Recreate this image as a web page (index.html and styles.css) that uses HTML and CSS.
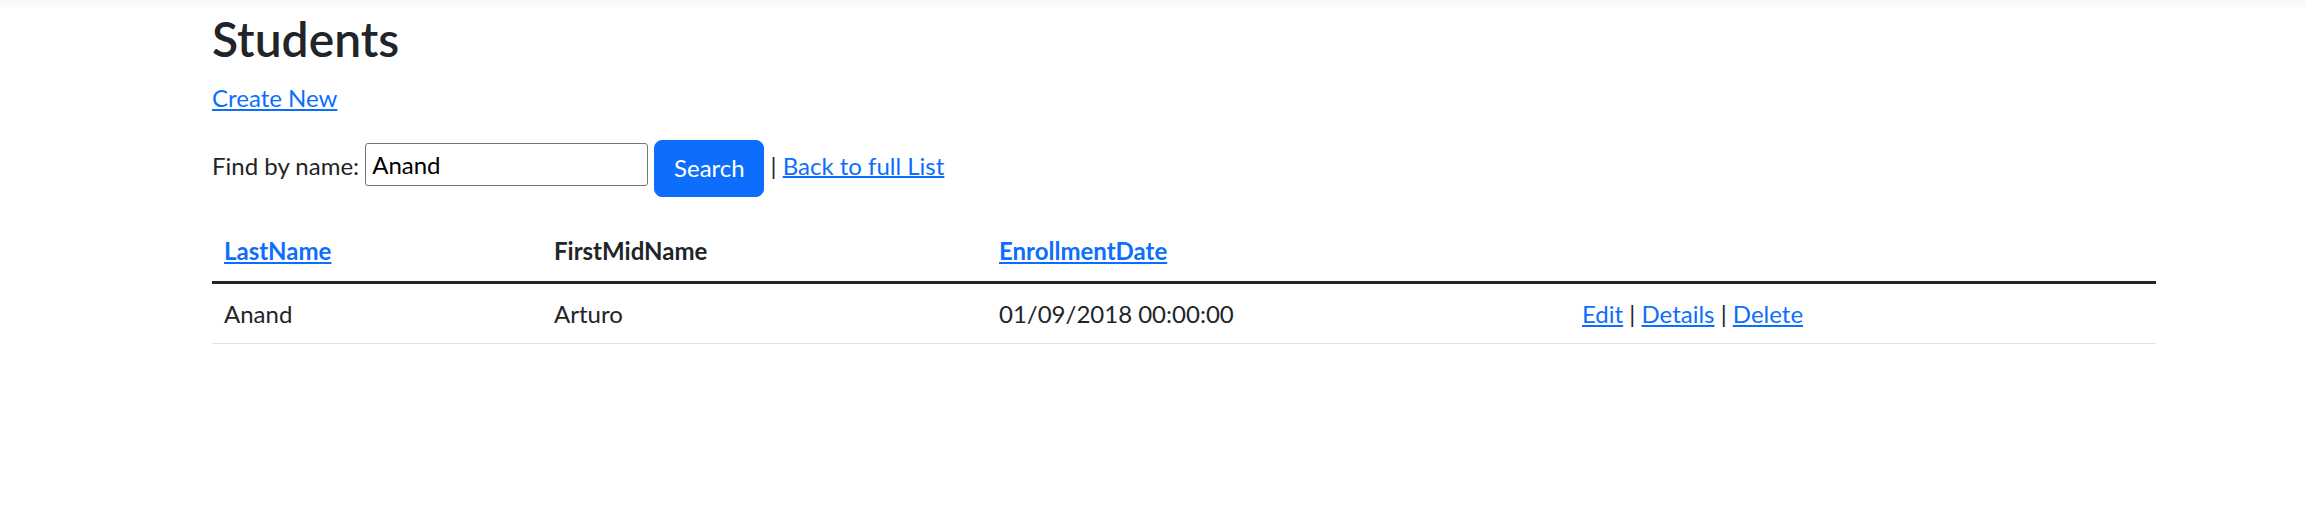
FILE: index.html
```html
<!DOCTYPE html>
<html lang="en">
<head>
<meta charset="utf-8">
<title>Index - Students</title>
<link rel="stylesheet" href="styles.css">
</head>
<body>
<div class="topbar"></div>
<main class="page">
  <h2 class="title">Students</h2>
  <p class="para"><a href="#" class="link">Create New</a></p>
  <form class="para search-form">
    Find by name: <input type="text" class="search-input" value="Anand"> <input type="submit" value="Search" class="btn-primary"> | <a href="#" class="link">Back to full List</a>
  </form>
  <table class="table">
    <thead>
      <tr>
        <th class="col1"><a href="#" class="link">LastName</a></th>
        <th class="col2">FirstMidName</th>
        <th class="col3"><a href="#" class="link">EnrollmentDate</a></th>
        <th class="col4"></th>
      </tr>
    </thead>
    <tbody>
      <tr>
        <td>Anand</td>
        <td>Arturo</td>
        <td>01/09/2018 00:00:00</td>
        <td><a href="#" class="link">Edit</a> | <a href="#" class="link">Details</a> | <a href="#" class="link">Delete</a></td>
      </tr>
    </tbody>
  </table>
</main>
</body>
</html>
```
FILE: styles.css
```css
html, body {
  margin: 0;
  padding: 0;
  background: #fff;
}
body {
  font-family: Lato, "Noto Sans", sans-serif;
  font-size: 24px;
  line-height: 1.5;
  color: #212529;
}
.topbar {
  height: 8px;
  background: linear-gradient(#f7f7f7, #fdfdfd);
}
.page {
  width: 1944px;
  margin-left: 212px;
  padding-top: 2px;
}
.title {
  margin: 0 0 12px;
  font-size: 48px;
  line-height: 1.2;
  font-weight: 600;
}
.para {
  margin: 0 0 24px;
}
.link {
  color: #0d6efd;
  text-decoration: underline;
}
.search-input {
  box-sizing: border-box;
  width: 283px;
  height: 43px;
  border: 1px solid #767676;
  border-radius: 3px;
  padding: 0 6px;
  font-family: inherit;
  font-size: 24px;
  color: #000;
  vertical-align: baseline;
}
.btn-primary {
  display: inline-block;
  vertical-align: middle;
  box-sizing: border-box;
  width: 110px;
  height: 57px;
  padding: 0 18px;
  border: 1px solid #0d6efd;
  border-radius: 8px;
  background: #0d6efd;
  color: #fff;
  font-family: inherit;
  font-size: 24px;
  line-height: 1.5;
}
.table {
  width: 1944px;
  border-collapse: collapse;
  margin-bottom: 24px;
}
.table th, .table td {
  padding: 12px;
  text-align: left;
  vertical-align: top;
}
.table th {
  font-weight: 700;
  border-bottom: 3px solid #212529;
}
.table td {
  padding-bottom: 11px;
  border-bottom: 1px solid #dee2e6;
}
.col1 { width: 306px; }
.col2 { width: 421px; }
.col3 { width: 559px; }
.col4 { width: 562px; }
```
